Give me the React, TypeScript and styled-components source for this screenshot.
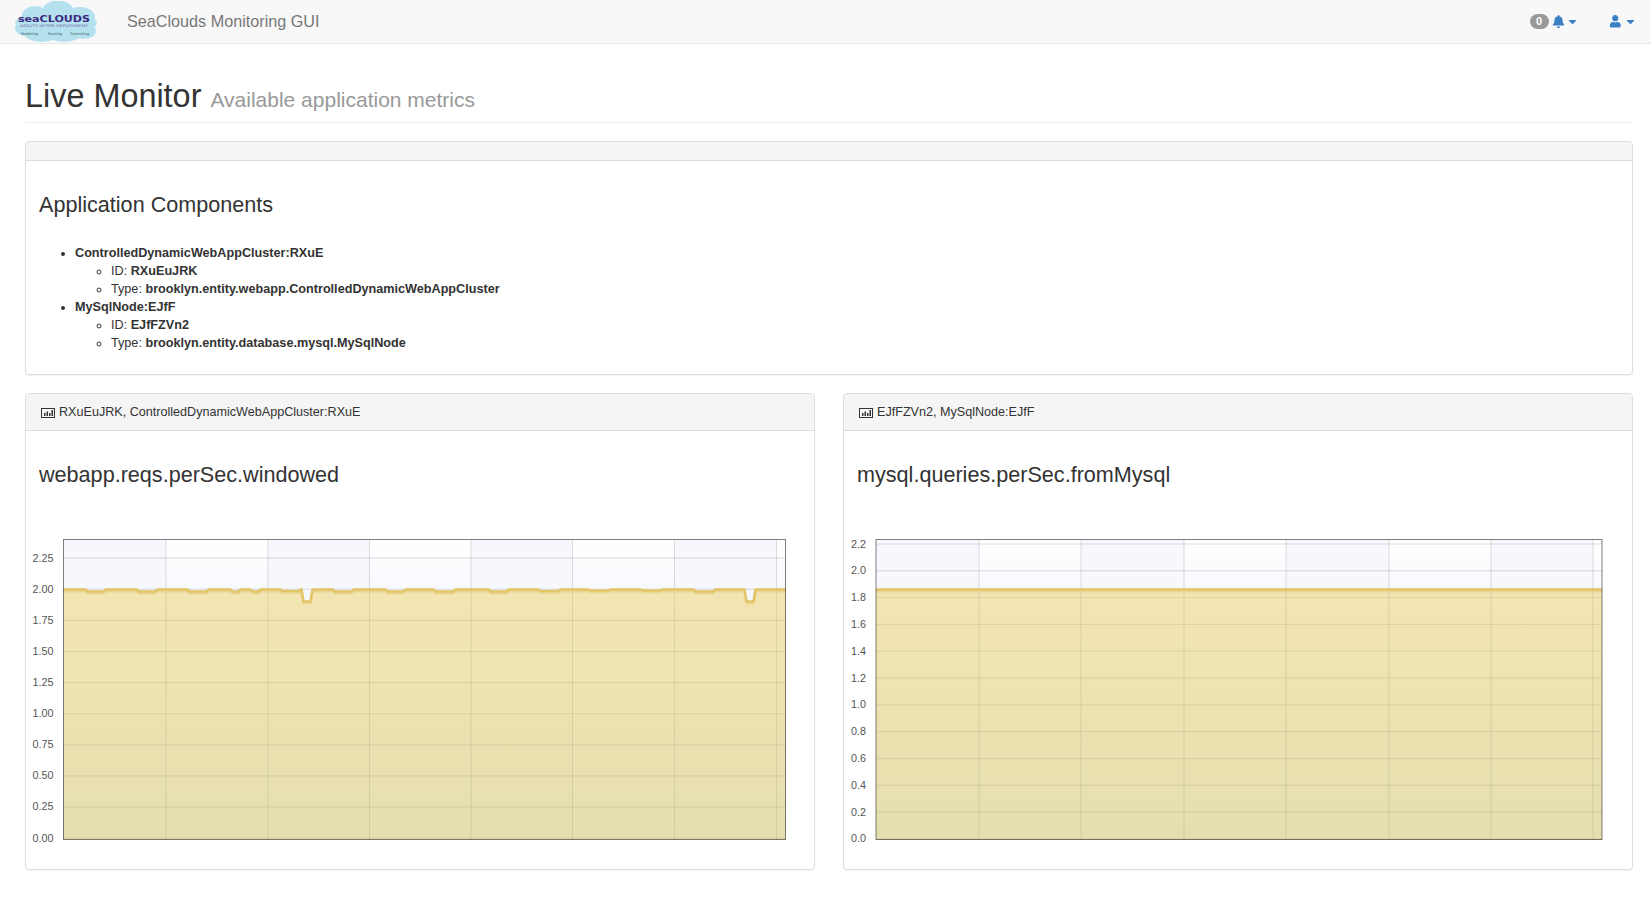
import { createGlobalStyle, styled } from 'styled-components';
import { FaBell, FaUser, FaCaretDown } from 'react-icons/fa';

const GlobalStyle = createGlobalStyle`
  html, body {
    margin: 0;
    padding: 0;
    background: #fff;
    font-family: "Liberation Sans", Arial, sans-serif;
    font-size: 14px;
    line-height: 1.42857;
    color: #333;
  }
`;

const Navbar = styled.div`
  display: flex;
  align-items: center;
  justify-content: space-between;
  height: 43px;
  background: #f8f8f8;
  border-bottom: 1px solid #e7e7e7;
`;

const Brand = styled.div`
  display: flex;
  align-items: center;
  padding-left: 14px;
  color: #777;
  font-size: 16.2px;
`;

const BrandTitle = styled.span`
  margin-left: 29px;
`;

const NavRight = styled.div`
  display: flex;
  align-items: center;
  gap: 30px;
  padding-right: 14px;
  color: #3c80c4;
`;

const NavItem = styled.div<{ $gap: number }>`
  display: flex;
  align-items: center;
  gap: ${(p) => p.$gap}px;
`;

const Badge = styled.span`
  display: inline-block;
  width: 19px;
  height: 15px;
  line-height: 15px;
  border-radius: 8px;
  background: #999;
  color: #fff;
  font-size: 11px;
  font-weight: bold;
  text-align: center;
  margin-right: 2px;
`;

const Page = styled.div`
  padding: 0 18px 0 25px;
`;

const PageHeader = styled.h1`
  margin: 35px 0 18px;
  padding-bottom: 7px;
  border-bottom: 1px solid #eee;
  font-size: 32.4px;
  font-weight: 400;
  line-height: 1.1;
  color: #333;

  small {
    font-size: 21px;
    font-weight: 400;
    color: #999;
  }
`;

const Panel = styled.div`
  background: #fff;
  border: 1px solid #ddd;
  border-radius: 4px;
  box-shadow: 0 1px 1px rgba(0, 0, 0, 0.05);
  margin-bottom: 18px;
`;

const PanelHeading = styled.div<{ $h: number }>`
  display: flex;
  align-items: center;
  gap: 4px;
  height: ${(p) => p.$h}px;
  padding: 1px 15px 0;
  box-sizing: border-box;
  background: #f5f5f5;
  border-bottom: 1px solid #ddd;
  border-radius: 3px 3px 0 0;
  font-size: 12.6px;
  color: #333;
`;

const SectionTitle = styled.h3`
  margin: 32px 0 0;
  font-size: 21.6px;
  font-weight: 400;
  line-height: 1.1;
  color: #333;
`;

const PanelBody = styled.div`
  padding: 0 13px 22px;
`;

const Tree = styled.ul`
  margin: 28px 0 0;
  padding-left: 36px;
  list-style: disc;

  ul {
    margin: 0;
    padding-left: 36px;
    list-style: circle;
  }

  li {
    line-height: 18px;
    font-size: 12.65px;
  }
`;

const Row = styled.div`
  display: grid;
  grid-template-columns: repeat(2, minmax(0, 1fr));
  gap: 28px;
`;

const ChartBody = styled.div`
  padding: 0 13px 29px;
`;

const ChartSvg = styled.svg`
  display: block;
  margin-top: 52px;
  overflow: visible;
`;

const AxisLabel = styled.text`
  font-family: "Liberation Sans", Arial, sans-serif;
  font-size: 10.8px;
  fill: #545454;
  text-anchor: end;
`;

const LogoWord = styled.text<{ $size: number; $fill: string; $weight?: number }>`
  font-family: "DejaVu Sans", sans-serif;
  font-size: ${(p) => p.$size}px;
  font-weight: ${(p) => p.$weight ?? 400};
  fill: ${(p) => p.$fill};
`;

// dips in the webapp series: [start x, end x, drop in px], in plot coordinates
const WEBAPP_DIPS: [number, number, number][] = [
  [24, 40, 2], [75, 92, 2], [126, 143, 2], [169, 175, 2], [189, 195, 2],
  [219, 235, 1.5], [240, 247, 12], [271, 288, 2], [324, 340, 2], [372, 390, 2],
  [427, 443, 2], [477, 495, 1.5], [527, 545, 1], [579, 597, 1], [632, 650, 2],
  [683, 690, 12],
];

const webappLine = (width: number) => {
  const pts: string[] = ['0,50'];
  WEBAPP_DIPS.forEach(([a, b, d]) => {
    pts.push(`${a - 2},50`, `${a},${50 + d}`, `${b},${50 + d}`, `${b + 2},50`);
  });
  pts.push(`${width},50`);
  return pts.join(' ');
};

interface ChartProps {
  width: number;
  height: number;
  left: number;
  columns: number[];
  ticks: { label: string; y: number }[];
  line: string;
}

const Chart = ({ width, height, left, columns, ticks, line }: ChartProps) => {
  const id = `fill${left}`;
  const edges = [0, ...columns, width];
  return (
    <ChartSvg width={left + width + 1} height={height + 1}>
      <defs>
        <linearGradient id={id} x1="0" y1="0" x2="0" y2="1">
          <stop offset="0" stopColor="#f3e4ac" />
          <stop offset="1" stopColor="#e3dca8" />
        </linearGradient>
        <linearGradient id={`${id}bg`} x1="0" y1="0" x2="0" y2="1">
          <stop offset="0" stopColor="#fff" />
          <stop offset="0.17" stopColor="#f8f9fe" />
        </linearGradient>
      </defs>
      <g transform={`translate(${left + 0.5} 0.5)`}>
        <rect x={0} y={0} width={width} height={height} fill={`url(#${id}bg)`} />
        {edges.slice(0, -1).map((x, i) =>
          i % 2 === 0 ? (
            <rect key={x} x={x} y={0} width={edges[i + 1] - x} height={height} fill="#f7f8fe" />
          ) : null
        )}
        {ticks.map((t) => (
          <line key={t.label} x1={0} x2={width} y1={t.y} y2={t.y} stroke="#000" strokeOpacity="0.13" />
        ))}
        {columns.map((x) => (
          <line key={x} x1={x} x2={x} y1={0} y2={height} stroke="#000" strokeOpacity="0.13" />
        ))}
        <polygon points={`${line} ${width},${height} 0,${height}`} fill={`url(#${id})`} fillOpacity="0.92" />
        {ticks.filter((t) => t.y > 52).map((t) => (
          <line key={`o${t.label}`} x1={0} x2={width} y1={t.y} y2={t.y} stroke="#000" strokeOpacity="0.07" />
        ))}
        {columns.map((x) => (
          <line key={`o${x}`} x1={x} x2={x} y1={52} y2={height} stroke="#000" strokeOpacity="0.07" />
        ))}
        <polyline
          points={line}
          transform="translate(0 1.5)"
          fill="none"
          stroke="#d9b54e"
          strokeOpacity="0.3"
          strokeWidth="3"
          strokeLinejoin="round"
        />
        <polyline points={line} fill="none" stroke="#e2c566" strokeWidth="2.5" strokeLinejoin="round" />
        <rect x={0} y={0} width={width} height={height} fill="none" stroke="#000" strokeOpacity="0.5" />
        {ticks.map((t) => (
          <AxisLabel key={`l${t.label}`} x={-10} y={t.y + 3.5}>{t.label}</AxisLabel>
        ))}
      </g>
    </ChartSvg>
  );
};

const webappTicks = ['2.25', '2.00', '1.75', '1.50', '1.25', '1.00', '0.75', '0.50', '0.25', '0.00'].map((label, i) => ({
  label,
  y: 18.6 + i * 31.11,
}));

const mysqlTicks = ['2.2', '2.0', '1.8', '1.6', '1.4', '1.2', '1.0', '0.8', '0.6', '0.4', '0.2', '0.0'].map((label, i) => ({
  label,
  y: 4.5 + i * 26.8,
}));

const CLOUD_PUFFS: [number, number, number, number][] = [
  [44, 11, 16, 11.5], [21, 14, 13, 9], [66, 16, 15, 10], [42, 22, 41, 12],
  [28, 32, 18, 9], [50, 32, 18, 9], [69, 30, 13, 8], [12, 27, 11, 8],
];

const Logo = () => (
  <svg width="84" height="42" viewBox="0 0 84 42">
    {CLOUD_PUFFS.map(([cx, cy, rx, ry]) => (
      <ellipse key={`${cx}-${cy}`} cx={cx} cy={cy} rx={rx} ry={ry} fill="#b5e0ee" />
    ))}
    <LogoWord x="4" y="21" $size={8} $fill="#3b2a80" $weight={700} textLength={72} lengthAdjust="spacingAndGlyphs">
      seaCLOUDS
    </LogoWord>
    <LogoWord x="6" y="25.5" $size={3.6} $fill="#7a5f9a" textLength={68} lengthAdjust="spacingAndGlyphs">
      AGILITY AFTER DEPLOYMENT
    </LogoWord>
    <LogoWord x="7" y="34" $size={3.6} $fill="#45605f" textLength={17} lengthAdjust="spacingAndGlyphs">Modeling</LogoWord>
    <LogoWord x="34" y="34" $size={3.6} $fill="#45605f" textLength={14} lengthAdjust="spacingAndGlyphs">Running</LogoWord>
    <LogoWord x="56" y="34" $size={3.6} $fill="#45605f" textLength={19} lengthAdjust="spacingAndGlyphs">Controlling</LogoWord>
  </svg>
);

const PanelIcon = () => (
  <svg width="14" height="10" viewBox="0 0 14 10">
    <rect x="0.5" y="0.5" width="13" height="9" fill="none" stroke="#333" />
    <path d="M3 5h1.5v3H3zM5.5 3.5H7V8H5.5zM8 5h1.5v3H8zM10.5 2H12v6h-1.5z" fill="#333" />
  </svg>
);

export default function App() {
  return (
    <>
      <GlobalStyle />
      <Navbar>
        <Brand>
          <Logo />
          <BrandTitle>SeaClouds Monitoring GUI</BrandTitle>
        </Brand>
        <NavRight>
          <NavItem $gap={1}>
            <Badge>0</Badge>
            <FaBell size={13} />
            <FaCaretDown size={13} />
          </NavItem>
          <NavItem $gap={3}>
            <FaUser size={12.5} />
            <FaCaretDown size={13} />
          </NavItem>
        </NavRight>
      </Navbar>
      <Page>
        <PageHeader>
          Live Monitor <small>Available application metrics</small>
        </PageHeader>
        <Panel>
          <PanelHeading $h={19} />
          <PanelBody>
            <SectionTitle>Application Components</SectionTitle>
            <Tree>
              <li>
                <b>ControlledDynamicWebAppCluster:RXuE</b>
                <ul>
                  <li>ID: <b>RXuEuJRK</b></li>
                  <li>Type: <b>brooklyn.entity.webapp.ControlledDynamicWebAppCluster</b></li>
                </ul>
              </li>
              <li>
                <b>MySqlNode:EJfF</b>
                <ul>
                  <li>ID: <b>EJfFZVn2</b></li>
                  <li>Type: <b>brooklyn.entity.database.mysql.MySqlNode</b></li>
                </ul>
              </li>
            </Tree>
          </PanelBody>
        </Panel>
        <Row>
          <Panel>
            <PanelHeading $h={37}>
              <PanelIcon />
              RXuEuJRK, ControlledDynamicWebAppCluster:RXuE
            </PanelHeading>
            <ChartBody>
              <SectionTitle>webapp.reqs.perSec.windowed</SectionTitle>
              <Chart
                width={722}
                height={300}
                left={24}
                columns={[102.5, 204.5, 306, 407.5, 509, 611, 713]}
                ticks={webappTicks}
                line={webappLine(722)}
              />
            </ChartBody>
          </Panel>
          <Panel>
            <PanelHeading $h={37}>
              <PanelIcon />
              EJfFZVn2, MySqlNode:EJfF
            </PanelHeading>
            <ChartBody>
              <SectionTitle>mysql.queries.perSec.fromMysql</SectionTitle>
              <Chart
                width={726}
                height={300}
                left={18.5}
                columns={[103, 205, 308, 410, 513, 615, 717]}
                ticks={mysqlTicks}
                line="0,50 726,50"
              />
            </ChartBody>
          </Panel>
        </Row>
      </Page>
    </>
  );
}
